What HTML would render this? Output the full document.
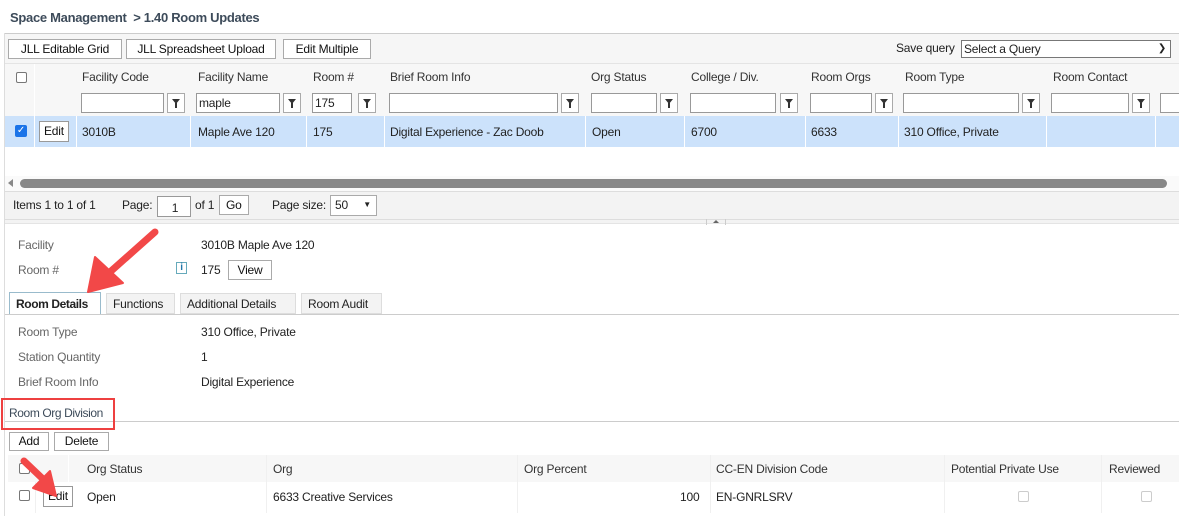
<!DOCTYPE html>
<html><head><meta charset="utf-8"><style>
*{box-sizing:border-box;margin:0;padding:0}
body{width:1179px;height:516px;overflow:hidden;background:#fff;font-family:"Liberation Sans",sans-serif;font-size:12px;letter-spacing:-0.2px;color:#222;position:relative}
.a{position:absolute;white-space:nowrap}
.btn{position:absolute;border:1px solid #aaa;background:#fff;height:20px;line-height:18px;padding:0 6px;font-size:12px;color:#111;text-align:center}
.inp{position:absolute;border:1px solid #999;background:#fff;height:20px;font-size:12px;line-height:18px;padding-left:2px}
.flt{position:absolute;border:1px solid #aaa;background:#fff;width:18px;height:20px}
.flt:after{content:"";position:absolute;left:4px;top:5px;border-left:4px solid transparent;border-right:4px solid transparent;border-top:5px solid #333}
.flt:before{content:"";position:absolute;left:7px;top:9px;width:2px;height:5px;background:#333}
.cb{position:absolute;width:11px;height:11px;border:1px solid #777;border-radius:2px;background:#fff}
.hd{color:#333}
.lbl{color:#666}
.vl{position:absolute;width:1px;background:#fff}
.tab{position:absolute;top:293px;height:21px;border:1px solid #ddd;background:#f3f3f3;padding:3px 6px 0 6px}
</style></head><body>
<div class="a" style="left:10px;top:10px;font-weight:bold;color:#3d4b5a;font-size:13px;letter-spacing:-0.3px">Space Management &nbsp;&gt; 1.40 Room Updates</div>
<div class="a" style="left:4px;top:33px;right:0;height:1px;background:#ccc"></div>
<div class="a" style="left:4px;top:33px;width:1px;height:483px;background:#ddd"></div>
<div class="a" style="left:5px;top:34px;right:0;height:29px;background:#f6f6f6"></div>
<div class="btn" style="left:8px;top:39px;width:114px">JLL Editable Grid</div>
<div class="btn" style="left:126px;top:39px;width:150px">JLL Spreadsheet Upload</div>
<div class="btn" style="left:283px;top:39px;width:88px">Edit Multiple</div>
<div class="a" style="left:896px;top:41px">Save query</div>
<div class="inp" style="left:961px;top:40px;width:210px;height:18px;line-height:16px;border-color:#777">Select a Query<span style="position:absolute;right:4px;top:0;font-size:10px">&#10095;</span></div>
<div class="a" style="left:5px;top:63px;right:0;height:1px;background:#e4e4e4"></div>
<div class="a" style="left:5px;top:64px;right:0;height:52px;background:#f7f7f7"></div>
<div class="cb" style="left:16px;top:72px"></div>
<div class="a hd" style="left:82px;top:70px">Facility Code</div>
<div class="a hd" style="left:198px;top:70px">Facility Name</div>
<div class="a hd" style="left:313px;top:70px">Room #</div>
<div class="a hd" style="left:390px;top:70px">Brief Room Info</div>
<div class="a hd" style="left:591px;top:70px">Org Status</div>
<div class="a hd" style="left:691px;top:70px">College / Div.</div>
<div class="a hd" style="left:811px;top:70px">Room Orgs</div>
<div class="a hd" style="left:905px;top:70px">Room Type</div>
<div class="a hd" style="left:1053px;top:70px">Room Contact</div>
<div class="inp" style="left:81px;top:93px;width:83px"></div><div class="flt" style="left:167px;top:93px"></div>
<div class="inp" style="left:196px;top:93px;width:84px">maple</div><div class="flt" style="left:283px;top:93px"></div>
<div class="inp" style="left:312px;top:93px;width:40px">175</div><div class="flt" style="left:358px;top:93px"></div>
<div class="inp" style="left:389px;top:93px;width:169px"></div><div class="flt" style="left:561px;top:93px"></div>
<div class="inp" style="left:591px;top:93px;width:66px"></div><div class="flt" style="left:660px;top:93px"></div>
<div class="inp" style="left:690px;top:93px;width:86px"></div><div class="flt" style="left:780px;top:93px"></div>
<div class="inp" style="left:810px;top:93px;width:62px"></div><div class="flt" style="left:875px;top:93px"></div>
<div class="inp" style="left:903px;top:93px;width:116px"></div><div class="flt" style="left:1022px;top:93px"></div>
<div class="inp" style="left:1051px;top:93px;width:78px"></div><div class="flt" style="left:1132px;top:93px"></div>
<div class="inp" style="left:1160px;top:93px;width:30px"></div>
<div class="a" style="left:5px;top:116px;right:0;height:31px;background:#cce2fb"></div>
<div class="vl" style="left:34px;top:64px;height:83px"></div>
<div class="vl" style="left:76px;top:116px;height:31px"></div>
<div class="vl" style="left:190px;top:116px;height:31px"></div>
<div class="vl" style="left:306px;top:116px;height:31px"></div>
<div class="vl" style="left:384px;top:116px;height:31px"></div>
<div class="vl" style="left:585px;top:116px;height:31px"></div>
<div class="vl" style="left:684px;top:116px;height:31px"></div>
<div class="vl" style="left:805px;top:116px;height:31px"></div>
<div class="vl" style="left:898px;top:116px;height:31px"></div>
<div class="vl" style="left:1046px;top:116px;height:31px"></div>
<div class="vl" style="left:1155px;top:116px;height:31px"></div>
<div class="a" style="left:15px;top:125px;width:12px;height:12px;background:#1a73e8;border-radius:2px;color:#fff;font-size:10px;line-height:12px;text-align:center">&#10003;</div>
<div class="btn" style="left:39px;top:121px;height:21px;padding:0 4px;border-color:#999">Edit</div>
<div class="a" style="left:82px;top:125px">3010B</div>
<div class="a" style="left:198px;top:125px">Maple Ave 120</div>
<div class="a" style="left:313px;top:125px">175</div>
<div class="a" style="left:390px;top:125px">Digital Experience - Zac Doob</div>
<div class="a" style="left:592px;top:125px">Open</div>
<div class="a" style="left:691px;top:125px">6700</div>
<div class="a" style="left:811px;top:125px">6633</div>
<div class="a" style="left:904px;top:125px">310 Office, Private</div>
<div class="a" style="left:5px;top:176px;right:0;height:15px;background:#fafafa"></div>
<div class="a" style="left:8px;top:179px;width:0;height:0;border-top:4px solid transparent;border-bottom:4px solid transparent;border-right:5px solid #888"></div>
<div class="a" style="left:20px;top:179px;width:1147px;height:9px;background:#888;border-radius:5px"></div>
<div class="a" style="left:5px;top:191px;right:0;height:28px;background:#f3f3f3;border-top:1px solid #ddd"></div>
<div class="a" style="left:13px;top:198px">Items 1 to 1 of 1</div>
<div class="a" style="left:122px;top:198px">Page:</div>
<div class="inp" style="left:157px;top:196px;width:34px;height:21px;padding-top:2px;text-align:center;border-color:#999">1</div>
<div class="a" style="left:195px;top:198px">of 1</div>
<div class="btn" style="left:219px;top:195px;padding:0 6px">Go</div>
<div class="a" style="left:272px;top:198px">Page size:</div>
<div class="inp" style="left:330px;top:195px;width:47px;height:21px;border-color:#aaa;padding-left:4px">50<span style="position:absolute;right:5px;top:0;font-size:8px">&#9660;</span></div>
<div class="a" style="left:5px;top:219px;right:0;height:5px;background:#f3f3f3;border-top:1px solid #ddd;border-bottom:1px solid #e4e4e4"></div>
<div class="a" style="left:706px;top:219px;width:20px;height:6px;border-left:1px solid #ccc;border-right:1px solid #ccc"></div>
<div class="a" style="left:713px;top:220px;width:0;height:0;border-left:3px solid transparent;border-right:3px solid transparent;border-bottom:3px solid #666"></div>

<div class="a lbl" style="left:18px;top:238px">Facility</div>
<div class="a" style="left:201px;top:238px">3010B Maple Ave 120</div>
<div class="a lbl" style="left:18px;top:263px">Room #</div>
<div class="a" style="left:176px;top:262px;width:11px;height:12px;border:1px solid #6ab;color:#27a;font-size:10px;line-height:10px;text-align:center;font-weight:bold">i</div>
<div class="a" style="left:201px;top:263px">175</div>
<div class="btn" style="left:228px;top:260px;height:20px;width:44px">View</div>
<div class="a" style="left:9px;top:292px;width:92px;height:23px;border:1px solid #9bc;border-bottom:1px dotted #69c;background:#fff;font-weight:bold;padding:4px 0 0 6px;letter-spacing:-0.4px">Room Details</div>
<div class="tab" style="left:106px;width:69px">Functions</div>
<div class="tab" style="left:180px;width:116px">Additional Details</div>
<div class="tab" style="left:301px;width:81px">Room Audit</div>
<div class="a" style="left:5px;top:314px;right:0;height:1px;background:#ccc"></div>
<div class="a lbl" style="left:18px;top:325px">Room Type</div>
<div class="a" style="left:201px;top:325px">310 Office, Private</div>
<div class="a lbl" style="left:18px;top:350px">Station Quantity</div>
<div class="a" style="left:201px;top:350px">1</div>
<div class="a lbl" style="left:18px;top:375px">Brief Room Info</div>
<div class="a" style="left:201px;top:375px">Digital Experience</div>
<div class="a" style="left:5px;top:421px;right:0;height:1px;background:#ccc"></div>
<div class="a" style="left:9px;top:406px;color:#3d4b5a;letter-spacing:-0.4px">Room Org Division</div>
<div class="a" style="left:1px;top:398px;width:114px;height:32px;border:2px solid #ee4040"></div>
<div class="btn" style="left:9px;top:432px;height:19px;line-height:17px;width:40px">Add</div>
<div class="btn" style="left:54px;top:432px;height:19px;line-height:17px;width:55px">Delete</div>
<div class="a" style="left:8px;top:455px;right:0;height:27px;background:#f7f7f7"></div>
<div class="vl" style="left:68px;top:455px;height:58px"></div>
<div class="vl" style="left:266px;top:455px;height:58px;background:#f0f0f0"></div>
<div class="vl" style="left:517px;top:455px;height:58px;background:#f0f0f0"></div>
<div class="vl" style="left:710px;top:455px;height:58px;background:#f0f0f0"></div>
<div class="vl" style="left:944px;top:455px;height:58px;background:#f0f0f0"></div>
<div class="vl" style="left:1101px;top:455px;height:58px;background:#f0f0f0"></div>
<div class="vl" style="left:35px;top:482px;height:31px;background:#f0f0f0"></div>
<div class="cb" style="left:19px;top:463px"></div>
<div class="a hd" style="left:87px;top:462px">Org Status</div>
<div class="a hd" style="left:273px;top:462px">Org</div>
<div class="a hd" style="left:524px;top:462px">Org Percent</div>
<div class="a hd" style="left:716px;top:462px">CC-EN Division Code</div>
<div class="a hd" style="left:951px;top:462px">Potential Private Use</div>
<div class="a hd" style="left:1109px;top:462px">Reviewed</div>
<div class="cb" style="left:19px;top:490px"></div>
<div class="btn" style="left:43px;top:486px;height:21px;padding:0 4px;border-color:#999">Edit</div>
<div class="a" style="left:87px;top:490px">Open</div>
<div class="a" style="left:273px;top:490px">6633 Creative Services</div>
<div class="a" style="left:680px;top:490px">100</div>
<div class="a" style="left:716px;top:490px">EN-GNRLSRV</div>
<div class="cb" style="left:1018px;top:491px;border-color:#ccc"></div>
<div class="cb" style="left:1141px;top:491px;border-color:#ccc"></div>

<svg class="a" style="left:0;top:0" width="1179" height="516">
<g fill="#f24848" stroke="#f24848" stroke-linecap="round">
<line x1="155" y1="232" x2="110" y2="272" stroke-width="7"/>
<polygon points="88,292 95,257 123,283" stroke-width="2" stroke-linejoin="round"/>
<line x1="24" y1="461" x2="44" y2="480" stroke-width="7"/>
<polygon points="56,496 33,488 50,471" stroke-width="2" stroke-linejoin="round"/>
</g>
</svg>
</body></html>
